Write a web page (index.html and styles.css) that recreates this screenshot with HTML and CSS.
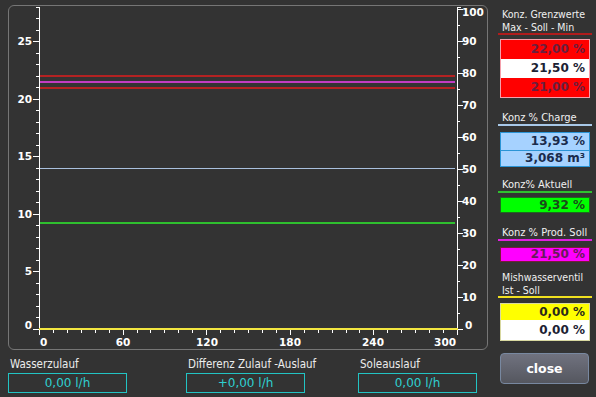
FILE: index.html
```html
<!DOCTYPE html>
<html lang="de">
<head>
    <meta charset="UTF-8">
    <meta name="viewport" content="width=device-width, initial-scale=1.0">
    <title>Konzentration</title>
    <link rel="stylesheet" href="styles.css">
</head>
<body>
    <div class="screen">
        <div class="main">
            <div class="chart-panel">
                <svg class="chart" width="478" height="343" viewBox="0 0 478 343">
                    <!-- Datenlinien -->
                    <rect x="31" y="69" width="415" height="2" fill="#b42222"/>
                    <rect x="31" y="75" width="415" height="2" fill="#c23cc2"/>
                    <rect x="31" y="81" width="415" height="2" fill="#b42222"/>
                    <rect x="31" y="162" width="415" height="1" fill="#a9c0de"/>
                    <rect x="31" y="216" width="415" height="2" fill="#2fbf2f"/>

                    <!-- linke Achse -->
                    <g stroke="#fff" stroke-width="1" fill="none">
                        <path d="M30.5 1V324"/>
                        <path d="M27 311.5H30M27 300.5H30M27 288.5H30M27 277.5H30M27 254.5H30M27 242.5H30M27 231.5H30M27 219.5H30M27 196.5H30M27 185.5H30M27 173.5H30M27 162.5H30M27 139.5H30M27 127.5H30M27 116.5H30M27 104.5H30M27 81.5H30M27 70.5H30M27 58.5H30M27 47.5H30M27 24.5H30M27 12.5H30M27 1.5H30"/>
                        <path d="M24 323.5H30M24 265.5H30M24 208.5H30M24 150.5H30M24 93.5H30M24 35.5H30"/>

                        <!-- rechte Achse -->
                        <path d="M448.5 1V324"/>
                        <path d="M448 1.5H452M448 307.5H451M448 275.5H451M448 243.5H451M448 211.5H451M448 179.5H451M448 147.5H451M448 115.5H451M448 83.5H451M448 51.5H451M448 19.5H451"/>
                        <path d="M448 323.5H454M448 291.5H454M448 259.5H454M448 227.5H454M448 195.5H454M448 163.5H454M448 131.5H454M448 99.5H454M448 67.5H454M448 35.5H454M448 3.5H454"/>

                        <!-- Zeitachse -->
                        <path d="M44.5 324V327M58.5 324V327M72.5 324V327M86.5 324V327M100.5 324V327M128.5 324V327M141.5 324V327M155.5 324V327M169.5 324V327M183.5 324V327M211.5 324V327M225.5 324V327M239.5 324V327M253.5 324V327M267.5 324V327M295.5 324V327M309.5 324V327M323.5 324V327M337.5 324V327M350.5 324V327M378.5 324V327M392.5 324V327M406.5 324V327M420.5 324V327M434.5 324V327"/>
                        <path d="M30.5 324V329M114.5 324V329M197.5 324V329M281.5 324V329M364.5 324V329M448.5 324V329"/>
                    </g>
                    <rect x="30" y="322" width="419" height="2" fill="#f2e640"/>

                    <g class="axis-label" text-anchor="end">
                        <text x="23" y="39">25</text>
                        <text x="23" y="97">20</text>
                        <text x="23" y="154">15</text>
                        <text x="23" y="212">10</text>
                        <text x="23" y="269">5</text>
                        <text x="23" y="323">0</text>
                    </g>
                    <g class="axis-label" text-anchor="start">
                        <text x="453" y="10">100</text>
                        <text x="453" y="39">90</text>
                        <text x="453" y="71">80</text>
                        <text x="453" y="103">70</text>
                        <text x="453" y="135">60</text>
                        <text x="453" y="167">50</text>
                        <text x="453" y="199">40</text>
                        <text x="453" y="231">30</text>
                        <text x="453" y="263">20</text>
                        <text x="453" y="295">10</text>
                        <text x="456" y="323">0</text>
                    </g>
                    <g class="axis-label" text-anchor="middle">
                        <text x="31" y="340" text-anchor="start">0</text>
                        <text x="114" y="340">60</text>
                        <text x="198" y="340">120</text>
                        <text x="281" y="340">180</text>
                        <text x="364" y="340">240</text>
                        <text x="447" y="340" text-anchor="end">300</text>
                    </g>
                </svg>
            </div>

            <div class="readouts">
                <div class="readout">
                    <div class="readout-label">Wasserzulauf</div>
                    <div class="readout-value">0,00 l/h</div>
                </div>
                <div class="readout">
                    <div class="readout-label">Differenz Zulauf -Auslauf</div>
                    <div class="readout-value">+0,00 l/h</div>
                </div>
                <div class="readout">
                    <div class="readout-label">Soleauslauf</div>
                    <div class="readout-value">0,00 l/h</div>
                </div>
            </div>
        </div>

        <div class="side">
            <div class="group group-limits">
                <div class="group-title title-two title-red">Konz. Grenzwerte<br>Max - Soll - Min</div>
                <div class="value-box box-limits">
                    <div class="value-row row-red">22,00 %</div>
                    <div class="value-row row-white">21,50 %</div>
                    <div class="value-row row-red">21,00 %</div>
                </div>
            </div>

            <div class="group group-charge">
                <div class="group-title title-blue">Konz % Charge</div>
                <div class="value-box box-charge">
                    <div class="value-row">13,93 %</div>
                    <div class="value-row row-split">3,068 m³</div>
                </div>
            </div>

            <div class="group group-actual">
                <div class="group-title title-green">Konz% Aktuell</div>
                <div class="value-box box-green">
                    <div class="value-row">9,32 %</div>
                </div>
            </div>

            <div class="group group-prod">
                <div class="group-title title-magenta">Konz % Prod. Soll</div>
                <div class="value-box box-magenta">
                    <div class="value-row">21,50 %</div>
                </div>
            </div>

            <div class="group group-valve">
                <div class="group-title title-two title-yellow">Mishwasserventil<br>Ist - Soll</div>
                <div class="value-box box-valve">
                    <div class="value-row row-yellow">0,00 %</div>
                    <div class="value-row row-white">0,00 %</div>
                </div>
            </div>

            <button class="close-button">close</button>
        </div>
    </div>
</body>
</html>
```

FILE: styles.css
```css
* {
    margin: 0;
    padding: 0;
    box-sizing: border-box;
}

body {
    width: 596px;
    height: 397px;
    overflow: hidden;
    background: #333333;
    color: #f0f0f0;
    font-family: 'DejaVu Sans', sans-serif;
    font-stretch: condensed;
}

.screen {
    display: flex;
    padding-top: 5px;
}

/* Diagramm */

.main {
    margin-left: 8px;
    width: 480px;
}

.chart-panel {
    height: 345px;
    border: 1px solid #767676;
    border-radius: 6px;
}

.chart {
    display: block;
}

.axis-label text {
    fill: #ffffff;
    font-family: 'DejaVu Sans', sans-serif;
    font-stretch: normal;
    font-weight: bold;
    font-size: 10.5px;
}

/* Durchfluss */

.readouts {
    display: grid;
    grid-template-columns: 178px 172px 120px;
    margin-top: 7px;
}

.readout-label {
    font-size: 11.5px;
    line-height: 14px;
    padding-left: 2px;
    color: #ececec;
}

.readout-value {
    margin-top: 2px;
    width: 119px;
    height: 20px;
    border: 1px solid #22c4c4;
    color: #2fd0d0;
    font-size: 12px;
    font-stretch: normal;
    line-height: 18px;
    text-align: center;
}

/* Seitenleiste */

.side {
    margin-left: 10px;
    width: 94px;
    padding-top: 3px;
}

.group-title {
    font-size: 11px;
    line-height: 12px;
    padding-left: 4px;
    border-bottom: 2px solid;
}

.title-two {
    font-size: 10.5px;
    line-height: 12.5px;
}

.title-red { border-color: #b01c1c; }
.title-blue { border-color: #a8c8e8; }
.title-green { border-color: #2fc02f; }
.title-magenta { border-color: #e020e0; }
.title-yellow { border-color: #f0e020; }

.value-box {
    margin: 5px 2px 0;
    border: 1px solid;
}

.value-row {
    font-size: 12px;
    font-weight: bold;
    font-stretch: normal;
    text-align: right;
    padding-right: 4px;
    height: 16px;
    line-height: 16px;
}

.group-charge { margin-top: 14px; }
.group-actual { margin-top: 12px; }
.group-prod { margin-top: 14px; }
.group-valve { margin-top: 9px; }

.box-limits {
    margin-top: 4px;
    border-color: #f4a0ac;
}

.box-limits .value-row {
    height: 19px;
    line-height: 19px;
}

.row-red {
    background: #ff0000;
    color: #6a1f3f;
}

.row-white {
    background: #ffffff;
    color: #1c2233;
}

.box-charge {
    margin-top: 6px;
    border-color: #2a94d6;
    background: #a6d2ff;
    color: #1a2b4c;
}

.box-charge .value-row {
    height: 17px;
    line-height: 17px;
}

.box-charge .row-split {
    height: 16px;
    line-height: 15px;
    border-top: 1px solid #2a94d6;
}

.box-green {
    margin-top: 4px;
    border-color: #1e6a1e;
    background: #00ff00;
    color: #1a4a1a;
}

.box-green .value-row {
    height: 14px;
    line-height: 14px;
}

.box-magenta {
    margin-top: 6px;
    border-color: #7a1a3a;
    background: #ff00ff;
    color: #6a1a5a;
}

.box-magenta .value-row {
    height: 13px;
    line-height: 13px;
}

.box-valve {
    border-color: #d8d8a0;
}

.row-yellow {
    background: #ffff00;
    color: #2a2a1a;
}

.box-valve .row-white {
    height: 20px;
    line-height: 20px;
}

.close-button {
    display: block;
    margin: 12px 0 0 2px;
    width: 89px;
    height: 31px;
    border: 1px solid #7888a0;
    border-radius: 4px;
    background: linear-gradient(#70727f, #55575f);
    color: #ffffff;
    font-family: 'DejaVu Sans', sans-serif;
    font-size: 12.5px;
    font-weight: bold;
    cursor: pointer;
}
```
